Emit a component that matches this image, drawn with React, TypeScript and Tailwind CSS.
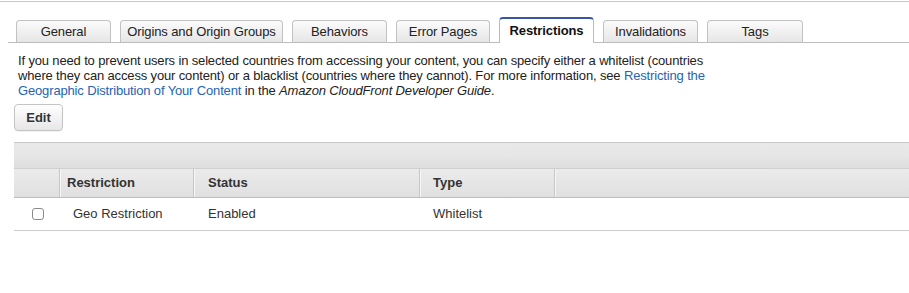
import React from 'react';

const tabs = [
  { label: 'General', w: 'w-[95px]' },
  { label: 'Origins and Origin Groups', w: 'w-[163px]' },
  { label: 'Behaviors', w: 'w-[95px]' },
  { label: 'Error Pages', w: 'w-[94px]' },
  { label: 'Restrictions', w: 'w-[95px]', active: true },
  { label: 'Invalidations', w: 'w-[95px]' },
  { label: 'Tags', w: 'w-[96px]' },
];

export default function App() {
  return (
    <div className="w-[909px] h-[293px] bg-white text-[#222] font-['Liberation_Sans',Arial,sans-serif] text-[13px] overflow-hidden">
      <div className="mt-px h-px bg-[#c8c8c8]" />

      {/* tab strip */}
      <div className="mt-[15px] ml-2 pl-2 flex items-end gap-[9px] border-b border-[#bcbcbc]">
        {tabs.map((t) =>
          t.active ? (
            <div
              key={t.label}
              className={`${t.w} h-[26px] -mb-px rounded-t-[4px] border border-b-0 border-[#bcbcbc] border-t-2 border-t-[#3b56a0] bg-white flex items-center justify-center font-bold text-[#111] tracking-[-0.1px]`}
            >
              {t.label}
            </div>
          ) : (
            <div
              key={t.label}
              className={`${t.w} h-[22px] rounded-t-[4px] border border-b-0 border-[#c2c2c2] bg-gradient-to-b from-[#fbfbfb] to-[#e6e6e6] flex items-center justify-center text-[#222] tracking-[-0.1px]`}
            >
              {t.label}
            </div>
          )
        )}
      </div>

      <p className="mt-[10px] ml-[18px] w-[705px] leading-[15px] tracking-[-0.15px]">
        If you need to prevent users in selected countries from accessing your content, you can specify either a whitelist
        (countries where they can access your content) or a blacklist (countries where they cannot). For more information, see{' '}
        <a className="text-[#2264b8]">Restricting the Geographic Distribution of Your Content</a> in the{' '}
        <i>Amazon CloudFront Developer Guide</i>.
      </p>

      <button className="mt-[6px] ml-[14px] w-[49px] h-[27px] rounded-[4px] border border-[#c4c4c4] bg-gradient-to-b from-[#ffffff] to-[#e7e7e7] font-bold text-[#333] shadow-[0_1px_1px_rgba(0,0,0,0.06)]">
        Edit
      </button>

      {/* table */}
      <div className="mt-[11px] ml-[14px]">
        <div className="h-[26px] border-t border-[#c9c9c9] bg-gradient-to-b from-[#e9e9e9] via-[#e6e6e6] to-[#dedede]" />
        <div className="grid grid-cols-[45px_134px_226px_135px_1fr] h-[30px] border-t border-b border-t-[#cfcfcf] border-b-[#bdbdbd] bg-gradient-to-b from-[#ebebeb] to-[#e0e0e0] font-bold text-[#333]">
          <div />
          <div className="border-l border-l-[#c7c7c7] shadow-[inset_1px_0_0_#f7f7f7] pl-[7px] flex items-center">Restriction</div>
          <div className="border-l border-l-[#c7c7c7] shadow-[inset_1px_0_0_#f7f7f7] pl-[14px] flex items-center">Status</div>
          <div className="border-l border-l-[#c7c7c7] shadow-[inset_1px_0_0_#f7f7f7] pl-[13px] flex items-center">Type</div>
          <div className="border-l border-l-[#c7c7c7] shadow-[inset_1px_0_0_#f7f7f7]" />
        </div>
        <div className="grid grid-cols-[45px_134px_226px_135px_1fr] h-[33px] border-b border-[#cccccc] text-[#333]">
          <div className="flex items-center pl-[18px]">
            <span className="w-[12px] h-[12px] rounded-[3px] border border-[#8a8a8a] bg-white" />
          </div>
          <div className="flex items-center pl-[14px]">Geo Restriction</div>
          <div className="flex items-center pl-[15px]">Enabled</div>
          <div className="flex items-center pl-[14px]">Whitelist</div>
          <div />
        </div>
      </div>
    </div>
  );
}
